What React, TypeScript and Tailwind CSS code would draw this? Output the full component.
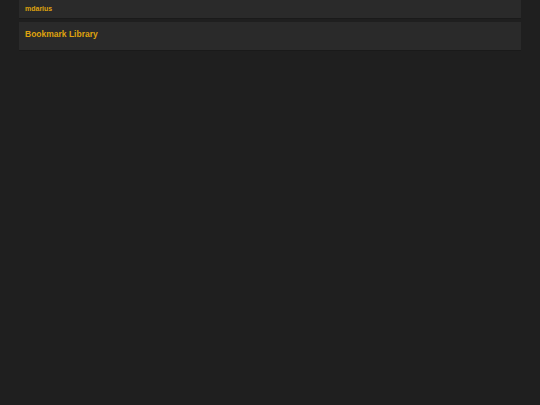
export default function App() {
  return (
    <div className="min-h-screen bg-[#1f1f1f] font-['Liberation_Sans',Arial,sans-serif]">
      <div className="mx-auto w-[502px]">
        <header className="flex h-[18px] items-center bg-[#2a2a2a] px-[6px] shadow-[0_1px_0_#1a1a1a]">
          <span className="text-[7px] font-bold text-[#dfa20e]">mdarius</span>
        </header>
        <section className="mt-[4px] flex h-[28px] items-center bg-[#2a2a2a] px-[6px] pb-[3px] shadow-[0_1px_0_#1a1a1a]">
          <h1 className="text-[8.5px] font-bold text-[#dfa20e]">Bookmark Library</h1>
        </section>
      </div>
    </div>
  );
}
